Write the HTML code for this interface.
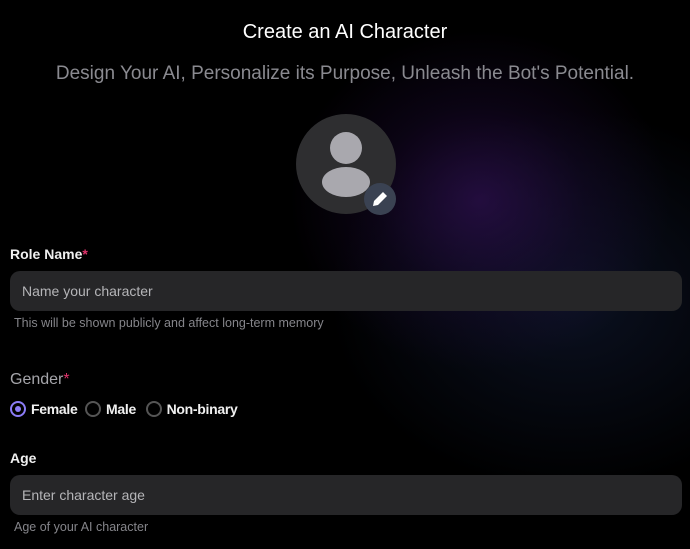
<!DOCTYPE html>
<html><head><style>
html,body{margin:0;padding:0;width:690px;height:549px;overflow:hidden;background:#000;font-family:"Liberation Sans",sans-serif;}
.bg{position:absolute;inset:0;background:
radial-gradient(ellipse 190px 170px at 480px 200px, rgba(55,18,95,0.6), rgba(35,12,65,0.3) 55%, transparent 100%),
radial-gradient(ellipse 240px 190px at 570px 300px, rgba(18,28,55,0.6), transparent 100%),
#000;}
.t{position:absolute;left:0;width:690px;text-align:center;}
.label{position:absolute;left:10px;color:#f0f0f0;font-size:14px;font-weight:bold;}
.star{color:#e0336b;}
.input{position:absolute;left:10px;width:672px;height:40px;border-radius:10px;background:#262628;color:#b5b5b8;font-size:14px;line-height:40px;box-sizing:border-box;padding-left:12px;}
.hint{position:absolute;left:14px;color:#85858a;font-size:12.5px;}
.radio{display:inline-block;width:12px;height:12px;border:2px solid #555;border-radius:50%;vertical-align:-3px;margin-right:5px;box-sizing:content-box;position:relative;}
.radio.on{border-color:#8b7cf6;}
.radio.on:after{content:"";position:absolute;left:3px;top:3px;width:6px;height:6px;border-radius:50%;background:#8b7cf6;}
</style></head><body>
<div class="bg"></div>
<div class="t" style="top:21px;color:#fff;font-size:20px;">Create an AI Character</div>
<div class="t" style="top:63px;color:#8a8a90;font-size:19px;">Design Your AI, Personalize its Purpose, Unleash the Bot's Potential.</div>
<svg style="position:absolute;left:290px;top:110px" width="120" height="110">
<circle cx="56" cy="54" r="50" fill="#2e2e30"/>
<circle cx="56" cy="38" r="16" fill="#a9a8ae"/>
<ellipse cx="56" cy="72" rx="24" ry="15" fill="#a9a8ae"/>
<circle cx="90" cy="89" r="16" fill="#3a4252"/>
<path d="M83 96 L84 91 L93 82 L97 86 L88 95 Z" fill="#fff"/>
</svg>
<div class="label" style="top:246px;">Role Name<span class="star">*</span></div>
<div class="input" style="top:271px;">Name your character</div>
<div class="hint" style="top:316px;">This will be shown publicly and affect long-term memory</div>
<div style="position:absolute;left:10px;top:371px;color:#a5a5aa;font-size:16px;">Gender<span class="star">*</span></div>
<div style="position:absolute;left:10px;top:401px;color:#f0f0f0;font-size:14px;font-weight:bold;white-space:nowrap;letter-spacing:-0.3px;">
<span class="radio on"></span>Female <span class="radio" style="margin-left:4px"></span>Male <span class="radio" style="margin-left:6px"></span>Non-binary</div>
<div class="label" style="top:450px;">Age</div>
<div class="input" style="top:475px;">Enter character age</div>
<div class="hint" style="top:520px;">Age of your AI character</div>
</body></html>
